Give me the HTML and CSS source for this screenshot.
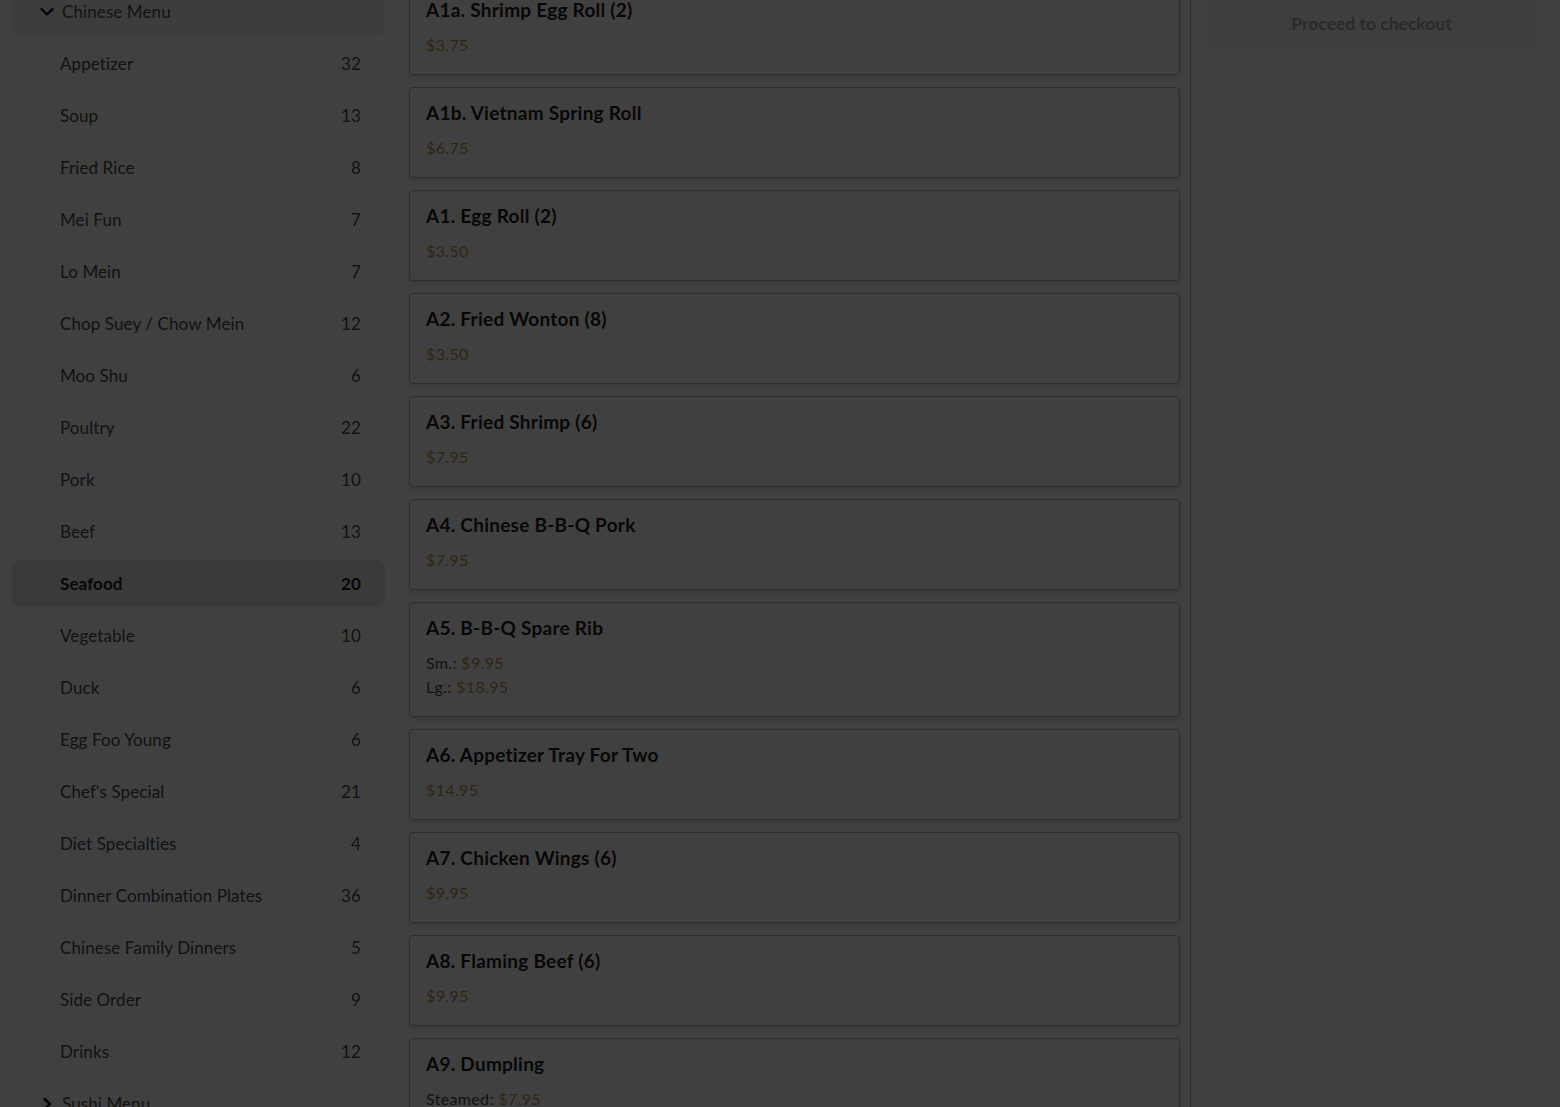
FILE: index.html
```html
<!DOCTYPE html>
<html lang="en">
<head>
<meta charset="utf-8">
<title>Menu</title>
<link rel="stylesheet" href="styles.css">
</head>
<body>
<div class="layout">
  <aside class="sidebar">
    <div class="group-head">
      <svg class="chev" viewBox="0 0 14 10" width="14" height="10"><path d="M1.5 2 L7 7.5 L12.5 2" fill="none" stroke="currentColor" stroke-width="2.4" stroke-linecap="round" stroke-linejoin="round"/></svg>
      <span>Chinese Menu</span>
    </div>
    <ul class="cats">
      <li class="cat"><span>Appetizer</span><span>32</span></li>
      <li class="cat"><span>Soup</span><span>13</span></li>
      <li class="cat"><span>Fried Rice</span><span>8</span></li>
      <li class="cat"><span>Mei Fun</span><span>7</span></li>
      <li class="cat"><span>Lo Mein</span><span>7</span></li>
      <li class="cat"><span>Chop Suey / Chow Mein</span><span>12</span></li>
      <li class="cat"><span>Moo Shu</span><span>6</span></li>
      <li class="cat"><span>Poultry</span><span>22</span></li>
      <li class="cat"><span>Pork</span><span>10</span></li>
      <li class="cat"><span>Beef</span><span>13</span></li>
      <li class="cat active"><span>Seafood</span><span>20</span></li>
      <li class="cat"><span>Vegetable</span><span>10</span></li>
      <li class="cat"><span>Duck</span><span>6</span></li>
      <li class="cat"><span>Egg Foo Young</span><span>6</span></li>
      <li class="cat"><span>Chef's Special</span><span>21</span></li>
      <li class="cat"><span>Diet Specialties</span><span>4</span></li>
      <li class="cat"><span>Dinner Combination Plates</span><span>36</span></li>
      <li class="cat"><span>Chinese Family Dinners</span><span>5</span></li>
      <li class="cat"><span>Side Order</span><span>9</span></li>
      <li class="cat"><span>Drinks</span><span>12</span></li>
    </ul>
    <div class="group-head closed">
      <svg class="chev" viewBox="0 0 14 14" width="14" height="14"><path d="M4.5 2 L10 7 L4.5 12" fill="none" stroke="currentColor" stroke-width="2.4" stroke-linecap="round" stroke-linejoin="round"/></svg>
      <span>Sushi Menu</span>
    </div>
  </aside>

  <main class="items">
    <div class="card"><h3>A1a. Shrimp Egg Roll (2)</h3><div class="prices"><div class="price">$3.75</div></div></div>
    <div class="card"><h3>A1b. Vietnam Spring Roll</h3><div class="prices"><div class="price">$6.75</div></div></div>
    <div class="card"><h3>A1. Egg Roll (2)</h3><div class="prices"><div class="price">$3.50</div></div></div>
    <div class="card"><h3>A2. Fried Wonton (8)</h3><div class="prices"><div class="price">$3.50</div></div></div>
    <div class="card"><h3>A3. Fried Shrimp (6)</h3><div class="prices"><div class="price">$7.95</div></div></div>
    <div class="card"><h3>A4. Chinese B-B-Q Pork</h3><div class="prices"><div class="price">$7.95</div></div></div>
    <div class="card"><h3>A5. B-B-Q Spare Rib</h3><div class="prices"><div class="price"><span class="lbl">Sm.:</span> $9.95</div><div class="price"><span class="lbl">Lg.:</span> $18.95</div></div></div>
    <div class="card"><h3>A6. Appetizer Tray For Two</h3><div class="prices"><div class="price">$14.95</div></div></div>
    <div class="card"><h3>A7. Chicken Wings (6)</h3><div class="prices"><div class="price">$9.95</div></div></div>
    <div class="card"><h3>A8. Flaming Beef (6)</h3><div class="prices"><div class="price">$9.95</div></div></div>
    <div class="card"><h3>A9. Dumpling</h3><div class="prices"><div class="price"><span class="lbl">Steamed:</span> $7.95</div><div class="price"><span class="lbl">Fried:</span> $7.95</div></div></div>
  </main>

  <aside class="cart">
    <button class="checkout" disabled>Proceed to checkout</button>
  </aside>
</div>
<div class="backdrop"></div>
</body>
</html>
```

FILE: styles.css
```css
* { box-sizing: border-box; }
html, body { margin: 0; padding: 0; height: 100%; overflow: hidden; }
body {
  background: #ffffff;
  font-family: Lato, "Open Sans", "Noto Sans", sans-serif;
  color: #555555;
}
.layout {
  display: grid;
  grid-template-columns: 397px 794px 1fr;
  height: 100%;
}
.sidebar {
  padding: 0 12px;
  margin-top: -12px;
  display: flex;
  flex-direction: column;
  gap: 5px;
}
.group-head {
  height: 47px;
  display: flex;
  align-items: center;
  gap: 8px;
  padding-left: 28px;
  background: #f1f1f1;
  border-radius: 8px;
  font-size: 17px;
  letter-spacing: 0.1px;
  color: #505050;
}
.group-head.closed { background: transparent; }
.chev { color: #111; flex: none; }
.cats {
  list-style: none;
  margin: 0;
  padding: 0;
  display: flex;
  flex-direction: column;
  gap: 5px;
}
.cat {
  height: 47px;
  display: flex;
  align-items: center;
  justify-content: space-between;
  padding: 0 24px 0 48px;
  border-radius: 8px;
  font-size: 17px;
  letter-spacing: 0.1px;
  color: #4a4a4a;
}
.cat.active {
  background: #e5e5e5;
  font-weight: 700;
  color: #1e1e1e;
}
.items {
  border-right: 1px solid #b8b8b8;
  padding: 0 10px 0 12px;
  margin-top: -16px;
  display: flex;
  flex-direction: column;
  gap: 12px;
}
.card {
  border: 1px solid #b5b5b5;
  border-radius: 4px;
  padding: 14px 16px 19px;
  box-shadow: 0 3px 5px rgba(0, 0, 0, 0.12);
  background: #fff;
}
.card h3 {
  margin: 0;
  font-size: 19px;
  line-height: 22px;
  letter-spacing: 0.25px;
  font-weight: 700;
  color: #1c1c1c;
}
.prices {
  margin-top: 14px;
  display: flex;
  flex-direction: column;
  gap: 4px;
}
.price {
  font-size: 16px;
  line-height: 20px;
  letter-spacing: 0.35px;
  color: #b8975a;
}
.price .lbl { color: #4a4a4a; }
.cart {
  padding: 0 24px 0 16px;
}
.checkout {
  display: block;
  width: 100%;
  height: 46px;
  border: none;
  border-radius: 0 0 6px 6px;
  background: #f8f8f8;
  color: #a8a8a8;
  font-family: inherit;
  font-size: 17.5px;
  font-weight: 700;
}
.backdrop {
  position: fixed;
  inset: 0;
  background: rgba(0, 0, 0, 0.75);
}
```
